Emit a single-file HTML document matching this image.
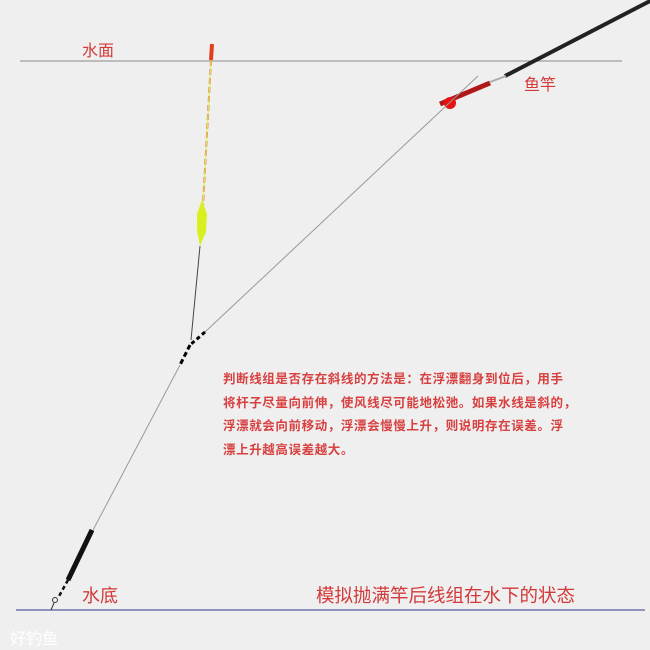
<!DOCTYPE html><html><head><meta charset="utf-8"><style>
body{margin:0;width:650px;height:650px;background:#efefef;overflow:hidden;position:relative;font-family:"Liberation Sans","Noto Sans CJK SC",sans-serif}
.t{position:absolute;color:#d23a3a;white-space:nowrap}
</style></head><body>
<svg width="650" height="650" style="position:absolute;left:0;top:0">
<line x1="20" y1="61" x2="622" y2="61" stroke="#888" stroke-width="1"/>
<line x1="16" y1="610" x2="645" y2="610" stroke="#5a5aa0" stroke-width="1.2"/>
<line x1="505" y1="76" x2="652" y2="0" stroke="#222" stroke-width="4"/>
<line x1="490" y1="82" x2="506" y2="76" stroke="#aaa" stroke-width="2"/>
<line x1="440" y1="104" x2="490" y2="83" stroke="#b01818" stroke-width="5"/>
<circle cx="450" cy="103" r="6" fill="#e81010"/>
<line x1="478" y1="76" x2="205" y2="332" stroke="#999" stroke-width="1"/>
<line x1="212" y1="44" x2="211" y2="60" stroke="#e04020" stroke-width="4"/>
<line x1="211" y1="60" x2="203" y2="205" stroke="#e07050" stroke-width="2" stroke-dasharray="6,3"/>
<line x1="211" y1="60" x2="203" y2="205" stroke="#e0f050" stroke-width="1" />
<path d="M202 200 L207 214 L206 232 L200 246 L197 230 L197 214 Z" fill="#d8f020"/>
<line x1="200" y1="246" x2="191" y2="340" stroke="#444" stroke-width="1"/>
<path d="M205 332 L190 345" stroke="#000" stroke-width="3" stroke-dasharray="4,3"/>
<path d="M190 345 L180 365" stroke="#000" stroke-width="3" stroke-dasharray="5,3"/>
<line x1="180" y1="365" x2="92" y2="532" stroke="#999" stroke-width="1"/>
<line x1="92" y1="530" x2="68" y2="580" stroke="#111" stroke-width="5"/>
<path d="M68 580 L58 598" stroke="#111" stroke-width="2.5" stroke-dasharray="4,3"/>
<circle cx="55" cy="600" r="2.5" fill="none" stroke="#333"/>
<line x1="54" y1="603" x2="51" y2="610" stroke="#333"/>
</svg>
<div class="t" style="left:82px;top:37px;font-size:16px">水面</div>
<div class="t" style="left:524px;top:71px;font-size:16px">鱼竿</div>
<div class="t" style="left:223px;top:368px;font-size:12.5px;letter-spacing:0.6px;line-height:23.5px;font-weight:bold;color:#d84040">判断线组是否存在斜线的方法是：在浮漂翻身到位后，用手<br>将杆子尽量向前伸，使风线尽可能地松弛。如果水线是斜的，<br>浮漂就会向前移动，浮漂会慢慢上升，则说明存在误差。浮<br>漂上升越高误差越大。</div>
<div class="t" style="left:82px;top:582px;font-size:18px">水底</div>
<div class="t" style="left:316px;top:582px;font-size:18.5px">模拟抛满竿后线组在水下的状态</div>
<div class="t" style="left:10px;top:625px;font-size:16px;color:#fff">好钓鱼</div>
</body></html>
